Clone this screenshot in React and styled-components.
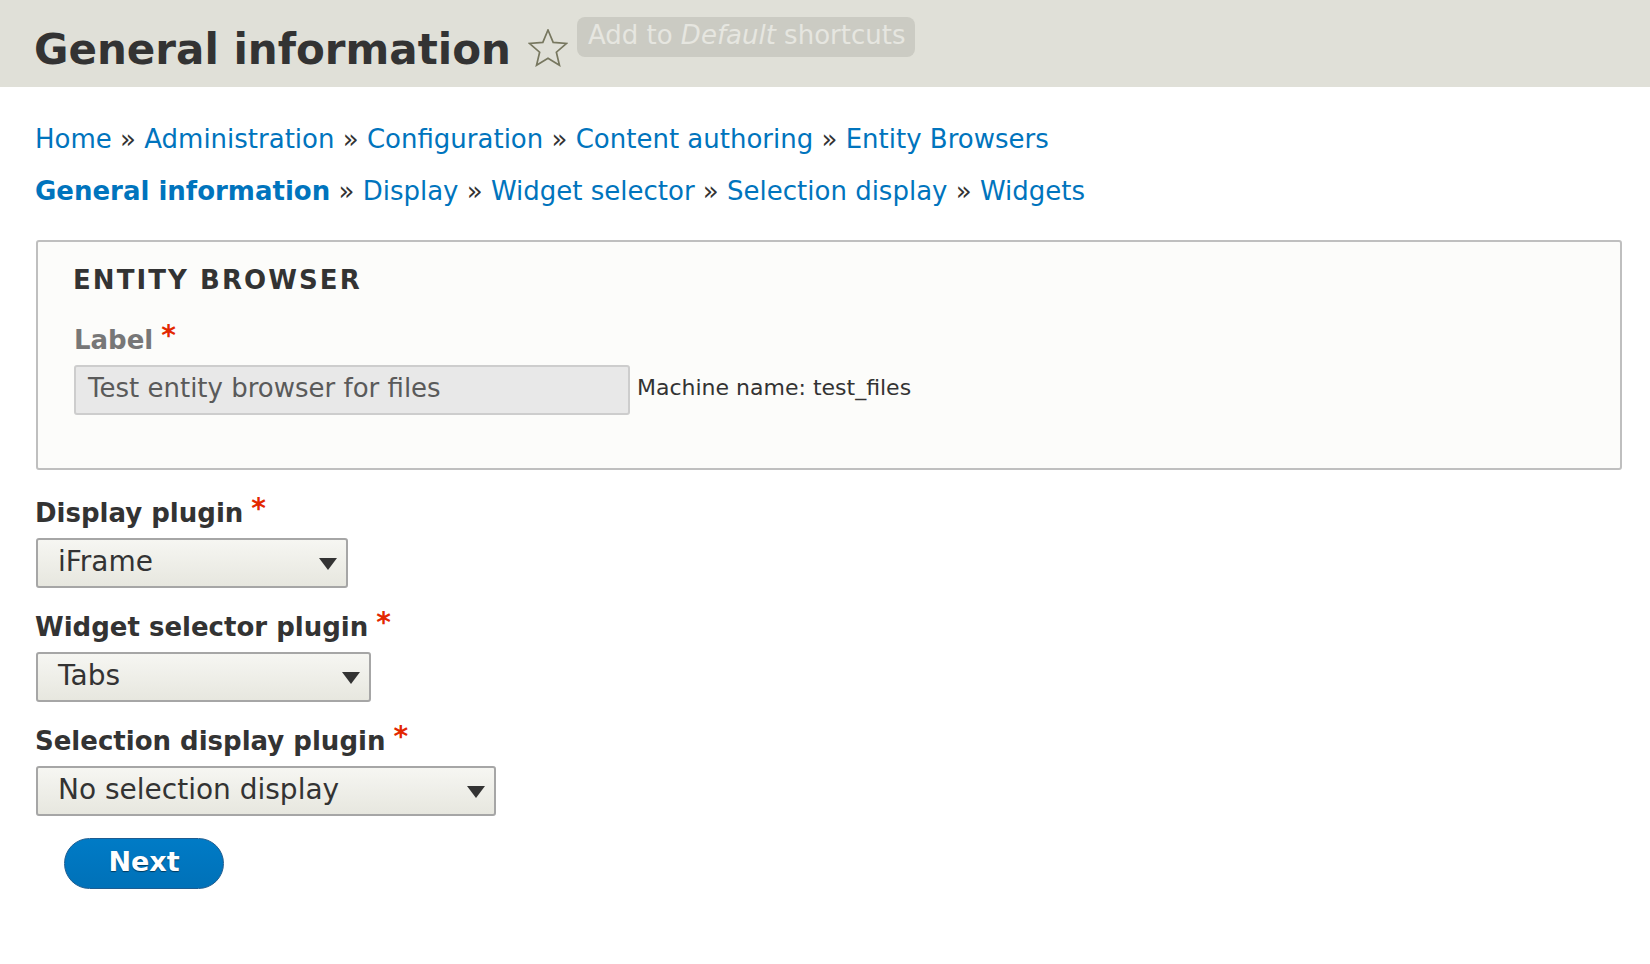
import React from 'react';
import styled, { createGlobalStyle } from 'styled-components';

const GlobalStyle = createGlobalStyle`
  html, body { margin: 0; padding: 0; background: #fff; }
  body { font-family: "DejaVu Sans", "Liberation Sans", sans-serif; color: #333; }
  *, *::before, *::after { box-sizing: border-box; }
`;

const Header = styled.header`
  height: 87px;
  background: #e0e0d8;
  display: flex;
  align-items: flex-start;
  padding-left: 34px;
`;

const Title = styled.h1`
  margin: 29px 0 0;
  font-size: 42px;
  line-height: 42px;
  font-weight: bold;
  color: #333;
  white-space: nowrap;
`;

const StarIcon = styled.svg`
  margin: 29px 0 0 17px;
  flex: none;
`;

const ShortcutButton = styled.span`
  margin: 17px 0 0 9px;
  height: 40px;
  padding: 1px 10px 5px 11px;
  border-radius: 8px;
  background: #cbcbc3;
  color: #e6e6e0;
  font-size: 26px;
  line-height: 34px;
  white-space: nowrap;
  em { font-style: italic; }
`;

const Main = styled.main`
  padding: 27px 28px 40px 35px;
`;

const Crumbs = styled.nav`
  font-size: 26px;
  line-height: 50px;
  white-space: nowrap;
  color: #333;
  margin-top: ${p => p.$top || 0}px;
`;

const Crumb = styled.a`
  color: #0074bd;
  text-decoration: none;
  font-weight: ${p => (p.$current ? 'bold' : 'normal')};
`;

const Sep = styled.span`
  color: #333;
`;

const Fieldset = styled.section`
  margin: 24px 0 0 1px;
  height: 230px;
  border: 2px solid #bfbfbf;
  border-radius: 3px;
  background: #fcfcfa;
  padding: 23px 36px 0 36px;
`;

const Legend = styled.div`
  font-size: 26px;
  line-height: 30px;
  font-weight: bold;
  text-transform: uppercase;
  letter-spacing: 0.08em;
  color: #333;
  margin-left: -1px;
`;

const Label = styled.div`
  font-size: 26px;
  line-height: 30px;
  font-weight: bold;
  color: ${p => (p.$disabled ? '#777' : '#333')};
  margin-top: ${p => p.$top || 0}px;
  white-space: nowrap;
`;

const Required = styled.span`
  color: #e32700;
  font-size: 28px;
  margin-left: 8px;
  position: relative;
  top: -4px;
`;

const InputRow = styled.div`
  display: flex;
  align-items: center;
  margin-top: 10px;
`;

const TextInput = styled.div`
  width: 556px;
  height: 50px;
  border: 2px solid #cdcdcd;
  border-radius: 3px;
  background: #e8e8e8;
  color: #5a5a5a;
  font-size: 26px;
  line-height: 42px;
  padding-left: 12px;
  white-space: nowrap;
`;

const MachineName = styled.span`
  margin-left: 7px;
  padding-bottom: 6px;
  font-size: 22px;
  color: #333;
  white-space: nowrap;
`;

const FormItem = styled.div`
  margin-top: ${p => p.$top}px;
`;

const SelectBox = styled.div`
  margin-top: 10px;
  width: ${p => p.$width}px;
  height: 50px;
  margin-left: 1px;
  border: 2px solid #a6a6a6;
  border-radius: 3px;
  background: linear-gradient(#f6f6f2, #e7e7df);
  display: flex;
  align-items: center;
  justify-content: space-between;
  padding: 0 9px 0 20px;
  font-size: 28px;
  color: #333;
  white-space: nowrap;
`;

const SelectText = styled.span`
  padding-bottom: 4px;
`;

const Arrow = styled.svg`
  flex: none;
  margin-top: 2px;
`;

const NextButton = styled.button`
  margin: 22px 0 0 29px;
  width: 160px;
  height: 51px;
  border: 1px solid #1e5c90;
  border-radius: 26px;
  background: linear-gradient(#007bc6, #0071b8);
  color: #fff;
  font-family: "DejaVu Sans", sans-serif;
  font-weight: bold;
  font-size: 27px;
  line-height: 1;
  text-shadow: 0 1px 1px rgba(0, 0, 0, 0.5);
  padding: 0 0 4px;
  cursor: pointer;
`;

const crumbs1 = ['Home', 'Administration', 'Configuration', 'Content authoring', 'Entity Browsers'];
const crumbs2 = ['General information', 'Display', 'Widget selector', 'Selection display', 'Widgets'];

function Trail({ items, current, top }) {
  return (
    <Crumbs $top={top}>
      {items.map((t, i) => (
        <React.Fragment key={t}>
          {i > 0 && <Sep> » </Sep>}
          <Crumb href="#" $current={t === current}>{t}</Crumb>
        </React.Fragment>
      ))}
    </Crumbs>
  );
}

function Select({ value, width }) {
  return (
    <SelectBox $width={width}>
      <SelectText>{value}</SelectText>
      <Arrow width="18" height="12" viewBox="0 0 18 12">
        <path d="M0 0 H18 L9 12 Z" fill="#333" />
      </Arrow>
    </SelectBox>
  );
}

export default function App() {
  return (
    <>
      <GlobalStyle />
      <Header>
        <Title>General information</Title>
        <StarIcon width="40" height="38" viewBox="0 0 40 38">
          <polygon
            points="20,1 25.17,13.38 38.55,14.47 28.37,23.22 31.46,36.28 20,29.3 8.54,36.28 11.63,23.22 1.45,14.47 14.83,13.38"
            fill="none"
            stroke="#77775f"
            strokeWidth="1.7"
            strokeLinejoin="miter"
          />
        </StarIcon>
        <ShortcutButton>Add to <em>Default</em> shortcuts</ShortcutButton>
      </Header>
      <Main>
        <Trail items={crumbs1} />
        <Trail items={crumbs2} current="General information" top={2} />
        <Fieldset>
          <Legend>Entity browser</Legend>
          <Label $disabled $top={30}>Label<Required>*</Required></Label>
          <InputRow>
            <TextInput>Test entity browser for files</TextInput>
            <MachineName>Machine name: test_files</MachineName>
          </InputRow>
        </Fieldset>
        <FormItem $top={28}>
          <Label>Display plugin<Required>*</Required></Label>
          <Select value="iFrame" width={312} />
        </FormItem>
        <FormItem $top={24}>
          <Label>Widget selector plugin<Required>*</Required></Label>
          <Select value="Tabs" width={335} />
        </FormItem>
        <FormItem $top={24}>
          <Label>Selection display plugin<Required>*</Required></Label>
          <Select value="No selection display" width={460} />
        </FormItem>
        <NextButton>Next</NextButton>
      </Main>
    </>
  );
}
